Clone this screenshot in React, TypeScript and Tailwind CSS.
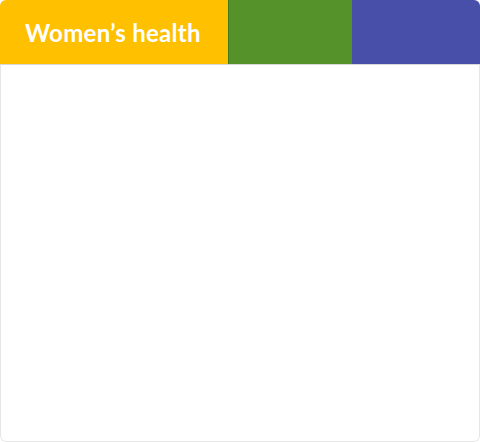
export default function App() {
  return (
    <div className="w-[480px] h-[442px] bg-white">
      <div className="h-full rounded-md overflow-hidden flex flex-col">
        {/* Tab strip */}
        <div className="flex h-[65px] shrink-0 border-b border-[#d8d8dc]">
          <div className="w-[228px] bg-[#ffc000] flex items-center pl-[25px] pt-[2px]">
            <span
              className="text-white font-bold text-[24px] leading-none tracking-[0.3px]"
              style={{ fontFamily: 'Lato, "Noto Sans", sans-serif' }}
            >
              Women’s health
            </span>
          </div>
          <div className="w-[124px] bg-[#55922a] border-l border-[#3f7a1f]" />
          <div className="flex-1 bg-[#484fa8]" />
        </div>
        {/* Empty panel */}
        <div className="flex-1 border-x border-b border-[#e6e6e6] rounded-b-md" />
      </div>
    </div>
  )
}
